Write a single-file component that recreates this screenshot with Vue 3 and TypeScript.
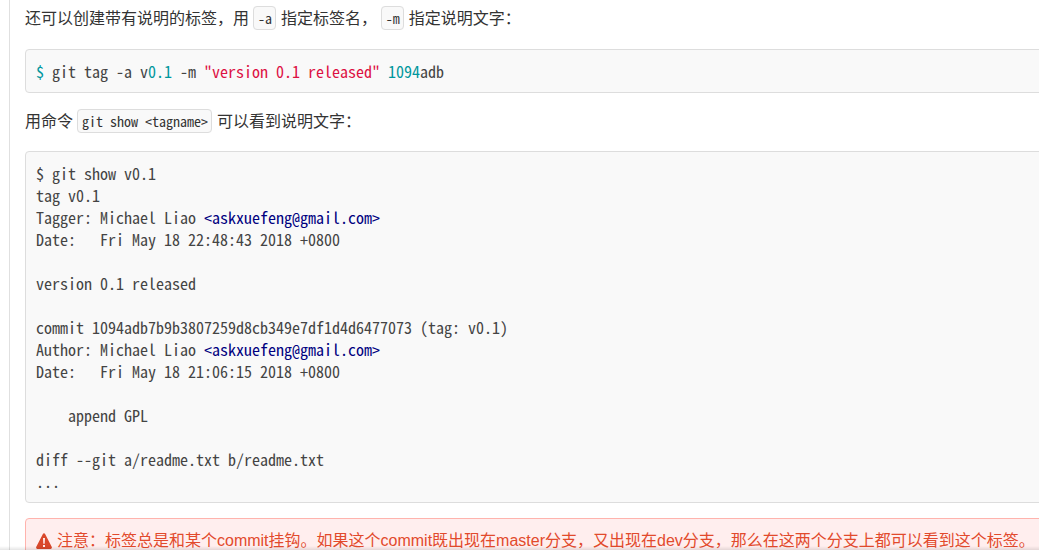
<script setup lang="ts">
const log: string[] = [
  'tag v0.1',
]
</script>

<template>
  <div class="page">
    <main class="content">
      <p class="para">还可以创建带有说明的标签，用 <code class="inline">-a</code> 指定标签名， <code class="inline">-m</code> 指定说明文字：</p>
      <pre class="block first"><span class="teal">$</span> git tag -a v<span class="teal">0.1</span> -m <span class="red">"version 0.1 released"</span> <span class="teal">1094</span>adb</pre>
      <p class="para tight">用命令 <code class="inline">git show &lt;tagname&gt;</code> 可以看到说明文字：</p>
      <pre class="block last">$ git show v0.1
{{ log[0] }}
Tagger: Michael Liao <span class="blue">&lt;askxuefeng@gmail.com&gt;</span>
Date:   Fri May 18 22:48:43 2018 +0800

version 0.1 released

commit 1094adb7b9b3807259d8cb349e7df1d4d6477073 (tag: v0.1)
Author: Michael Liao <span class="blue">&lt;askxuefeng@gmail.com&gt;</span>
Date:   Fri May 18 21:06:15 2018 +0800

    append GPL

diff --git a/readme.txt b/readme.txt
...</pre>
      <div class="alert">
        <svg class="warn" viewBox="0 0 16 14" width="16" height="16" preserveAspectRatio="none" aria-hidden="true">
          <path fill-rule="evenodd" d="M8 0.2c.5 0 .9.3 1.1.7l6.6 11.2c.5.8-.1 1.8-1.1 1.8H1.4c-1 0-1.6-1-1.1-1.8L6.9.9C7.1.5 7.5.2 8 .2zM7 4.4l.3 5h1.4l.3-5H7zm0 6.1v1.7h2v-1.7H7z"/>
        </svg>
        <span>注意：标签总是和某个commit挂钩。如果这个commit既出现在master分支，又出现在dev分支，那么在这两个分支上都可以看到这个标签。</span>
      </div>
    </main>
    <div class="fade"></div>
  </div>
</template>

<style>
html, body { margin: 0; overflow: hidden; background: #fff; }
</style>

<style scoped>
.page {
  position: relative;
  width: 1039px;
  height: 550px;
  overflow: hidden;
  padding-left: 9px;
  box-sizing: border-box;
}
.content {
  width: 1100px;
  box-sizing: border-box;
  height: 550px;
  border-left: 1px solid #e0e0e0;
  padding: 7px 0 0 15px;
  font-family: "Liberation Sans", "Noto Sans CJK SC", sans-serif;
  font-size: 16px;
  color: #333;
  line-height: 24px;
}
.para { margin: 0 0 18px; height: 24px; white-space: nowrap; }
.tight { margin-bottom: 17px; }
.inline {
  font-family: "Noto Sans Mono CJK SC", "Liberation Mono", monospace;
  font-size: 14px;
  line-height: 16px;
  padding: 1px 3.5px;
  background: #f9f9f9;
  border: 1px solid #ddd;
  border-radius: 4px;
  color: #333;
}
.block {
  margin: 0 0 16px;
  padding: 10px;
  background: #f9f9f9;
  border: 1px solid #ddd;
  border-radius: 4px;
  font-family: "Noto Sans Mono CJK SC", "Liberation Mono", monospace;
  font-size: 16px;
  line-height: 22px;
  color: #444;
}
.first { margin-bottom: 17px; }
.last { margin-bottom: 15px; }
.teal { color: #00979d; }
.red { color: #dd1144; }
.blue { color: #000080; }
.alert {
  display: flex;
  align-items: center;
  gap: 5px;
  white-space: nowrap;
  padding: 10px;
  background: #ffeeee;
  border: 1px solid #ffb3ad;
  border-radius: 4px;
  color: #e24a2c;
}
.warn { fill: #d9482b; flex: none; }
.fade {
  position: absolute;
  left: 0;
  right: 0;
  bottom: 0;
  height: 4px;
  background: linear-gradient(to bottom, rgba(0,0,0,0), rgba(0,0,0,0.1));
}
</style>
